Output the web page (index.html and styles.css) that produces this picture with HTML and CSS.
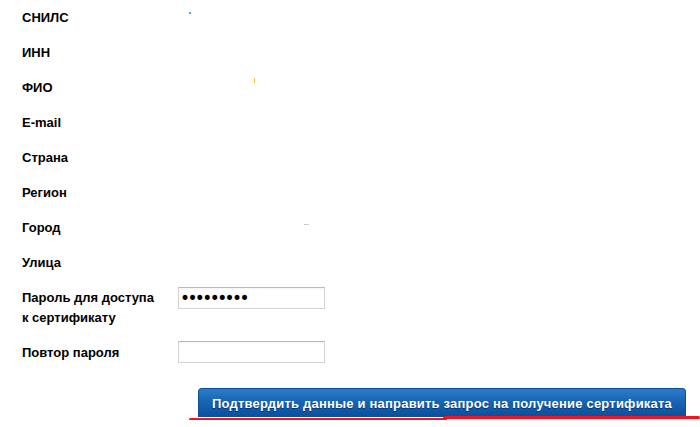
FILE: index.html
```html
<!DOCTYPE html>
<html lang="ru">
<head>
<meta charset="utf-8">
<title>Запрос сертификата</title>
<link rel="stylesheet" href="styles.css">
</head>
<body>
<form class="form">
  <div class="row"><div class="label">СНИЛС</div><div class="value"><span class="speck speck-blue"></span></div></div>
  <div class="row"><div class="label">ИНН</div><div class="value"></div></div>
  <div class="row"><div class="label">ФИО</div><div class="value"><span class="speck speck-yellow"></span></div></div>
  <div class="row"><div class="label">E-mail</div><div class="value"></div></div>
  <div class="row"><div class="label">Страна</div><div class="value"></div></div>
  <div class="row"><div class="label">Регион</div><div class="value"></div></div>
  <div class="row"><div class="label">Город</div><div class="value"><span class="speck speck-gray"></span></div></div>
  <div class="row"><div class="label">Улица</div><div class="value"></div></div>
  <div class="row"><div class="label">Пароль для доступа<br>к сертификату</div><div class="value"><input class="field field-pass" type="password" value="123456789"></div></div>
  <div class="row"><div class="label">Повтор пароля</div><div class="value"><input class="field field-2" type="password" value=""></div></div>
  <div class="actions">
    <button class="submit" type="button">Подтвердить данные и направить запрос на получение сертификата</button>
    <span class="mark mark-left"></span>
    <span class="mark mark-right"></span>
  </div>
</form>
</body>
</html>
```
FILE: styles.css
```css
html, body {
  margin: 0;
  padding: 0;
  background: #ffffff;
}
body {
  font-family: "Liberation Sans", Arial, sans-serif;
  font-size: 13px;
  color: #000000;
}
.form {
  padding: 0 0 0 22px;
}
.row {
  display: grid;
  grid-template-columns: 156px 1fr;
  padding: 7.5px 0;
  line-height: 20px;
}
.label {
  font-weight: bold;
}
.value {
  position: relative;
  height: 20px;
}
.speck {
  display: inline-block;
  vertical-align: top;
}
.speck-blue {
  width: 2px;
  height: 2px;
  background: #5aa0e0;
  margin: 4px 0 0 11px;
}
.speck-yellow {
  width: 1px;
  height: 5px;
  background: #f0c040;
  margin: 0 0 0 76px;
}
.speck-gray {
  width: 5px;
  height: 1px;
  background: #c8ccd0;
  margin: 6px 0 0 126px;
}
.field {
  box-sizing: border-box;
  display: block;
  width: 147px;
  height: 22px;
  margin: -1px 0 0 0;
  padding: 0 1px;
  border: 1px solid #d2d2d2;
  border-top-color: #b9b9b9;
  box-shadow: inset 0 1px 1px rgba(0, 0, 0, 0.04);
  background: #ffffff;
  font-family: "DejaVu Sans", sans-serif;
  font-size: 13px;
  color: #000000;
  outline: none;
}
.field-pass {
  font-size: 17px;
  letter-spacing: -2.6px;
}
.field-2 {
  margin-top: -2px;
}
.actions {
  position: relative;
  margin-top: 18px;
  padding-left: 176px;
  height: 32px;
}
.submit {
  box-sizing: border-box;
  display: block;
  width: 488px;
  height: 29px;
  padding: 0;
  border: 1px solid #0b4f99;
  border-bottom: none;
  border-radius: 4px 4px 0 0;
  background: linear-gradient(to bottom, #2a7ccb 0%, #1765b4 45%, #0a4f9c 100%);
  color: #ffffff;
  font-family: "Liberation Sans", Arial, sans-serif;
  font-size: 13px;
  font-weight: bold;
  letter-spacing: 0.2px;
  text-align: center;
  text-shadow: 0 1px 1px rgba(0, 20, 60, 0.6);
  cursor: pointer;
}
.mark {
  position: absolute;
  display: block;
  height: 3px;
  background: #f0141e;
  border-radius: 2px;
}
.mark-left {
  left: 167px;
  width: 258px;
  top: 30px;
}
.mark-right {
  left: 421px;
  width: 257px;
  top: 28px;
}
```
